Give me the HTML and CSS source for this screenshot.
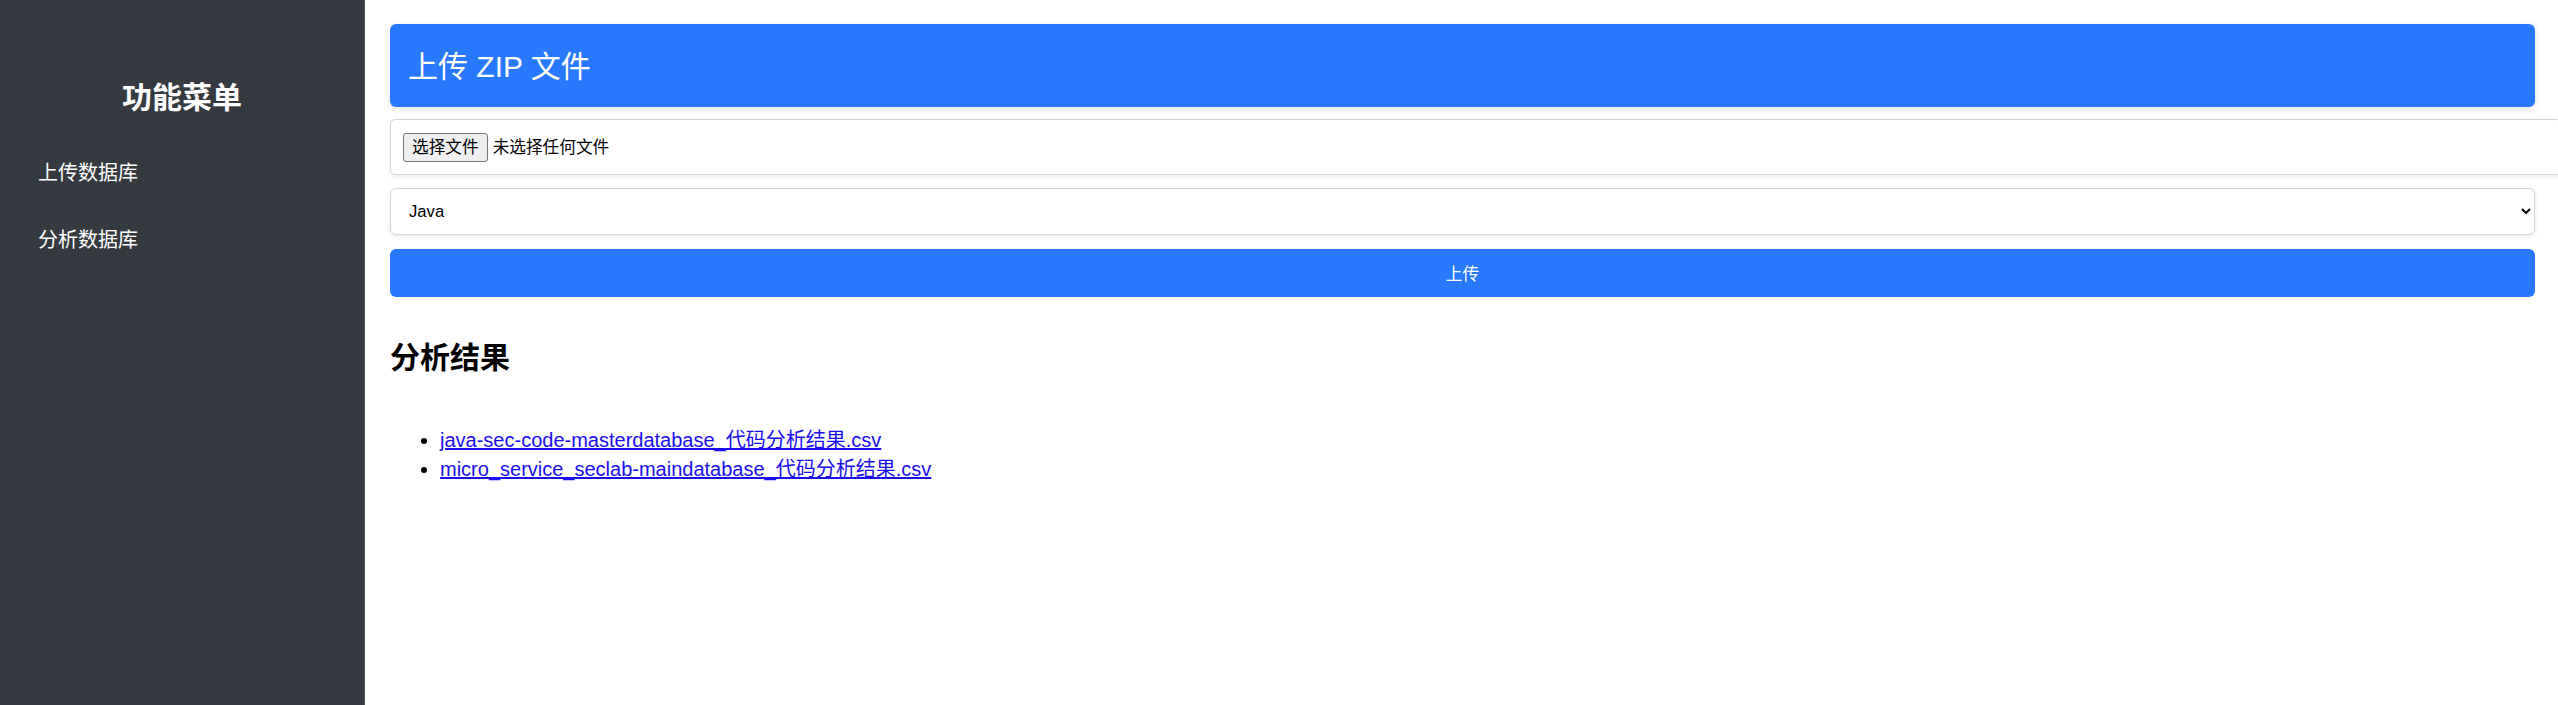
FILE: index.html
```html
<!DOCTYPE html>
<html lang="zh-CN">
<head>
<meta charset="utf-8">
<title>代码分析</title>
<link rel="stylesheet" href="styles.css">
</head>
<body>
<div class="layout">
  <aside class="sidebar">
    <h2 class="side-title">功能菜单</h2>
    <nav class="menu">
      <a class="menu-item" href="#">上传数据库</a>
      <a class="menu-item" href="#">分析数据库</a>
    </nav>
  </aside>
  <main class="main">
    <h1 class="banner">上传 ZIP 文件</h1>
    <div class="filebox">
      <button class="file-btn" type="button">选择文件</button><span class="file-name">未选择任何文件</span>
    </div>
    <select class="lang">
      <option>Java</option>
      <option>Python</option>
      <option>JavaScript</option>
    </select>
    <button class="upload" type="button">上传</button>
    <h2 class="results-title">分析结果</h2>
    <ul class="results">
      <li><a href="#">java-sec-code-masterdatabase_代码分析结果.csv</a></li>
      <li><a href="#">micro_service_seclab-maindatabase_代码分析结果.csv</a></li>
    </ul>
  </main>
</div>
</body>
</html>
```

FILE: styles.css
```css
html, body {
  margin: 0;
  padding: 0;
  overflow: hidden;
  background: #ffffff;
  font-family: "Liberation Sans", Arial, "Noto Sans CJK SC", sans-serif;
}

.layout {
  display: flex;
  min-height: 100vh;
}

.sidebar {
  width: 365px;
  flex: 0 0 365px;
  background: #343a40;
  border-right: 1px solid #4d545b;
  color: #ffffff;
  padding: 80px 0 0 0;
  box-sizing: border-box;
}

.side-title {
  margin: 0 0 24px 0;
  font-size: 30px;
  line-height: 36px;
  font-weight: bold;
  text-align: center;
}

.menu {
  display: flex;
  flex-direction: column;
}

.menu-item {
  display: block;
  color: #ffffff;
  text-decoration: none;
  font-size: 20px;
  line-height: 25px;
  padding: 21px 20px 21px 38px;
}

.main {
  flex: 1;
  min-width: 0;
  padding: 24px 23px 0 25px;
  display: flex;
  flex-direction: column;
  align-items: stretch;
}

.banner {
  margin: 0 0 12px 0;
  background: #2979ff;
  color: #ffffff;
  font-size: 30px;
  font-weight: normal;
  line-height: 35px;
  padding: 25px 18px 23px 18px;
  border-radius: 6px;
  box-shadow: 0 2px 6px rgba(0, 0, 0, 0.12);
}

.filebox {
  box-sizing: content-box;
  width: 100%;
  height: 29px;
  padding: 13px 12px 12px 12px;
  border: 1px solid #d4d4d4;
  border-radius: 5px;
  box-shadow: 0 2px 5px rgba(0, 0, 0, 0.08);
  display: flex;
  align-items: center;
  font-size: 16.67px;
  margin-bottom: 13px;
  background: #ffffff;
}

.file-btn {
  height: 29px;
  box-sizing: border-box;
  padding: 0 8px;
  margin: 0 5px 0 0;
  font-family: "Liberation Sans", Arial, "Noto Sans CJK SC", sans-serif;
  font-size: 16.67px;
  line-height: 27px;
  color: #000000;
  background: #efefef;
  border: 1px solid #767676;
  border-radius: 3px;
}

.file-name {
  color: #000000;
  line-height: 29px;
}

.lang {
  display: block;
  width: 100%;
  height: 47px;
  margin: 0 0 14px 0;
  padding: 0 8px 0 14px;
  font-family: "Liberation Sans", Arial, "Noto Sans CJK SC", sans-serif;
  font-size: 16.67px;
  color: #000000;
  background-color: #ffffff;
  border: 1px solid #cfd3da;
  border-radius: 6px;
  box-shadow: 0 2px 5px rgba(0, 0, 0, 0.08);
}

.upload {
  display: block;
  width: 100%;
  height: 48px;
  margin: 0;
  border: none;
  border-radius: 6px;
  background: #2979ff;
  color: #ffffff;
  font-family: "Liberation Sans", Arial, "Noto Sans CJK SC", sans-serif;
  font-size: 16.67px;
}

.results-title {
  margin: 43px 0 0 0;
  font-size: 30px;
  line-height: 36px;
  font-weight: bold;
  color: #000000;
}

.results {
  margin: 50px 0 0 0;
  padding-left: 50px;
  font-size: 20px;
  line-height: 29px;
}

.results a {
  color: #1a0dee;
}
```
